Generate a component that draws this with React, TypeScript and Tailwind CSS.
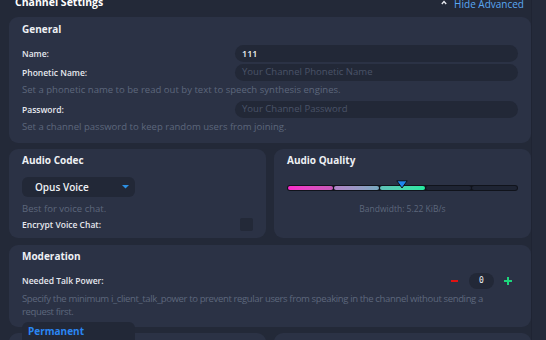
import React from "react";

const font = { fontFamily: '"Open Sans", "Noto Sans", sans-serif' };

function Card({ children, className = "" }: { children: React.ReactNode; className?: string }) {
  return <div className={`rounded-[9px] bg-[#2b3245] px-[13px] ${className}`}>{children}</div>;
}

function Heading({ children }: { children: React.ReactNode }) {
  return <div className="h-[14px] text-[10px] font-bold leading-[14px] text-[#eef0f4]">{children}</div>;
}

function Label({ children }: { children: React.ReactNode }) {
  return <div className="text-[8.5px] font-semibold leading-[12px] text-[#e6e8ee]">{children}</div>;
}

function Desc({ children, className = "" }: { children: React.ReactNode; className?: string }) {
  return <div className={`text-[9.55px] leading-[12px] text-[#5d677c] ${className}`}>{children}</div>;
}

function Input({ value, placeholder }: { value?: string; placeholder?: string }) {
  return (
    <div className="flex h-[17px] items-center rounded-full bg-[#222837] px-[7px]">
      {value ? (
        <span className="text-[9px] font-semibold text-[#eef0f4]">{value}</span>
      ) : (
        <span className="text-[9.55px] text-[#4a5368]">{placeholder}</span>
      )}
    </div>
  );
}

export default function App() {
  return (
    <div className="flex h-[340px] w-[546px] overflow-hidden bg-[#232938]" style={font}>
      <div className="relative w-[531px] shrink-0 pl-[9px]">
        {/* header */}
        <div className="flex h-[17px] items-start justify-between pr-[7px]">
          <div className="ml-[6px] mt-[-3px] text-[10.5px] font-bold leading-[11px] text-white">Channel Settings</div>
          <div className="mt-[-1px] flex items-center gap-[7px] text-[10px] leading-[10px] text-[#5aa8f2]">
            <svg width="6" height="5" viewBox="0 0 6 5" className="mb-[3px]">
              <polyline points="0.8,4 3,1.5 5.2,4" fill="none" stroke="#e8eaf0" strokeWidth="1.3" />
            </svg>
            <span>Hide Advanced</span>
          </div>
        </div>

        {/* General */}
        <Card className="pt-[5px] pb-[10px]">
          <Heading>General</Heading>
          <div className="mt-[9px] grid grid-cols-[213px_1fr] items-center gap-y-[2px]">
            <Label>Name:</Label>
            <Input value="111" />
            <Label>Phonetic Name:</Label>
            <Input placeholder="Your Channel Phonetic Name" />
          </div>
          <Desc className="mt-[3px]">Set a phonetic name to be read out by text to speech synthesis engines.</Desc>
          <div className="mt-[5px] grid grid-cols-[213px_1fr] items-center">
            <Label>Password:</Label>
            <Input placeholder="Your Channel Password" />
          </div>
          <Desc className="mt-[3px]">Set a channel password to keep random users from joining.</Desc>
        </Card>

        {/* Audio */}
        <div className="mt-[6px] grid grid-cols-2 gap-[8px]">
          <Card className="pt-[4px] pb-[7px]">
            <Heading>Audio Codec</Heading>
            <div className="mt-[10px] flex h-[20px] w-[113px] items-center justify-between rounded-[6px] bg-[#222837] pl-[13px] pr-[6px]">
              <span className="text-[10px] font-semibold text-[#eef0f4]">Opus Voice</span>
              <svg width="7" height="4" viewBox="0 0 7 4">
                <polygon points="0,0 7,0 3.5,3.5" fill="#2c8fe3" />
              </svg>
            </div>
            <Desc className="mt-[6px]">Best for voice chat.</Desc>
            <div className="mt-[3px] flex items-center justify-between">
              <Label>Encrypt Voice Chat:</Label>
              <div className="h-[13px] w-[13px] rounded-[2px] bg-[#232938]" />
            </div>
          </Card>
          <Card className="pt-[4px] pb-[7px]">
            <Heading>Audio Quality</Heading>
            <div className="relative mt-[18px]">
              <div className="flex h-[6px] gap-[1px] rounded-full bg-[#10131b] p-[1px]">
                <div className="h-full flex-1 rounded-full bg-gradient-to-r from-[#fb28cb] to-[#c55ab8]" />
                <div className="h-full flex-1 rounded-full bg-gradient-to-r from-[#b283c8] to-[#76aac0]" />
                <div className="h-full flex-1 rounded-full bg-gradient-to-r from-[#5ec2b8] to-[#22eaa0]" />
                <div className="h-full flex-1 rounded-full bg-[#1e2433]" />
                <div className="h-full flex-1 rounded-full bg-[#1e2433]" />
              </div>
              <svg width="12" height="9" viewBox="0 0 12 9" className="absolute left-[109px] top-[-5px]">
                <polygon points="0.8,0.8 11.2,0.8 6,8" fill="#1f86ee" stroke="#0e1118" strokeWidth="1" />
              </svg>
            </div>
            <div className="mt-[12px] text-center text-[8.5px] leading-[12px] text-[#5d677c]">Bandwidth: 5.22 KiB/s</div>
          </Card>
        </div>

        {/* Moderation */}
        <Card className="mt-[7px] pt-[4px] pb-[9px]">
          <Heading>Moderation</Heading>
          <div className="mt-[10px] flex h-[16px] items-center justify-between">
            <Label>Needed Talk Power:</Label>
            <div className="mr-[6px] flex items-center">
              <div className="h-[2px] w-[7px] bg-[#e01212]" />
              <div className="ml-[11px] flex h-[16px] w-[25px] items-center justify-center rounded-full bg-[#222837] text-[8px] text-[#eef0f4]" style={{ fontFamily: '"DejaVu Sans Mono", monospace' }}>
                0
              </div>
              <svg width="8" height="8" viewBox="0 0 8 8" className="ml-[10px]">
                <rect x="3" y="0" width="2" height="8" fill="#1dd67c" />
                <rect x="0" y="3" width="8" height="2" fill="#1dd67c" />
              </svg>
            </div>
          </div>
          <Desc className="mt-[3px] leading-[13px] tracking-[-0.38px] whitespace-nowrap">
            Specify the minimum i_client_talk_power to prevent regular users from speaking in the channel without sending a
            <br />
            request first.
          </Desc>
        </Card>

        {/* Bottom row */}
        <div className="mt-[6px] grid grid-cols-2 gap-[8px]">
          <Card className="h-[40px] pt-[4px]">
            <Heading>Channel Type</Heading>
          </Card>
          <Card className="h-[40px] pt-[4px]">
            <Heading>Max Users</Heading>
          </Card>
        </div>

        {/* open dropdown */}
        <div className="absolute left-[22px] top-[322px] h-[30px] w-[113px] rounded-t-[6px] bg-[#222837] pl-[6px] pt-[3px]">
          <div className="text-[10px] font-bold leading-[12px] text-[#2a86f3]">Permanent</div>
        </div>
      </div>
      <div className="flex-1 border-l border-[#1f2433] bg-[#242a3a]" />
    </div>
  );
}
